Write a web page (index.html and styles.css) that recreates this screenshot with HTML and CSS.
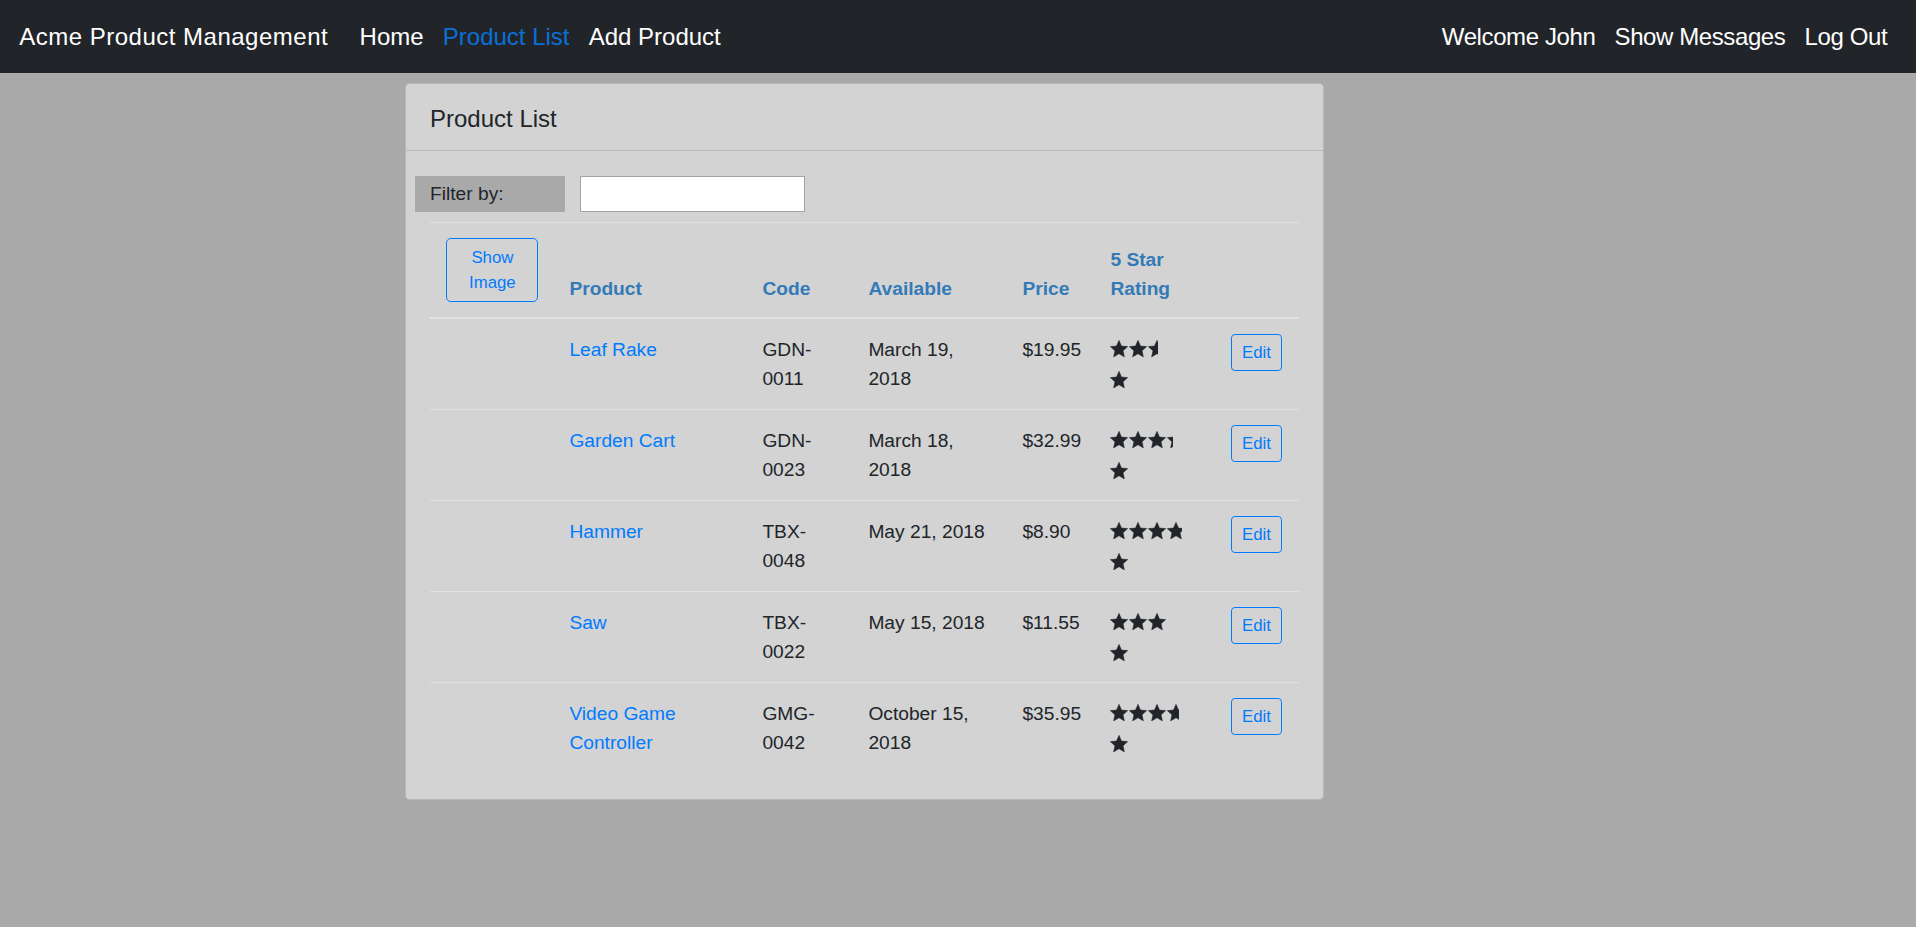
FILE: index.html
```html
<!DOCTYPE html>
<html lang="en">
<head>
<meta charset="utf-8">
<title>Acme Product Management</title>
<link rel="stylesheet" href="styles.css">
</head>
<body>
<nav class="navbar">
  <a class="brand" href="#">Acme Product Management</a>
  <ul class="nav">
    <li><a class="nav-link" href="#">Home</a></li>
    <li><a class="nav-link active" href="#">Product List</a></li>
    <li><a class="nav-link" href="#">Add Product</a></li>
  </ul>
  <ul class="nav nav-right">
    <li><a class="nav-link" href="#">Welcome John</a></li>
    <li><a class="nav-link" href="#">Show Messages</a></li>
    <li><a class="nav-link" href="#">Log Out</a></li>
  </ul>
</nav>

<main class="container">
  <div class="card">
    <div class="card-header">Product List</div>
    <div class="card-body">
      <div class="filter-row">
        <div class="filter-label">Filter by:</div>
        <div class="filter-col"><input class="filter-input" type="text"></div>
      </div>

      <table class="table">
        <colgroup>
          <col class="c-img"><col class="c-name"><col class="c-code"><col class="c-date"><col class="c-price"><col class="c-rating"><col class="c-edit">
        </colgroup>
        <thead>
          <tr>
            <th><button class="btn btn-show" type="button">Show Image</button></th>
            <th>Product</th>
            <th>Code</th>
            <th>Available</th>
            <th>Price</th>
            <th>5 Star Rating</th>
            <th></th>
          </tr>
        </thead>
        <tbody>
          <tr>
            <td></td>
            <td class="txt"><a class="plink" href="#">Leaf Rake</a></td>
            <td class="txt">GDN-0011</td>
            <td class="txt">March 19, 2018</td>
            <td class="txt price">$19.95</td>
            <td><div class="crop" style="width:48px" title="3.2"><div class="stars">
              <span class="star"><svg viewBox="0.3 0.3 23.4 22.3"><polygon points="12,0.6 15.29,8.07 23.41,8.89 17.33,14.33 19.05,22.31 12,18.2 4.95,22.31 6.67,14.33 0.59,8.89 8.71,8.07"/></svg></span>
              <span class="star"><svg viewBox="0.3 0.3 23.4 22.3"><polygon points="12,0.6 15.29,8.07 23.41,8.89 17.33,14.33 19.05,22.31 12,18.2 4.95,22.31 6.67,14.33 0.59,8.89 8.71,8.07"/></svg></span>
              <span class="star"><svg viewBox="0.3 0.3 23.4 22.3"><polygon points="12,0.6 15.29,8.07 23.41,8.89 17.33,14.33 19.05,22.31 12,18.2 4.95,22.31 6.67,14.33 0.59,8.89 8.71,8.07"/></svg></span>
              <span class="star"><svg viewBox="0.3 0.3 23.4 22.3"><polygon points="12,0.6 15.29,8.07 23.41,8.89 17.33,14.33 19.05,22.31 12,18.2 4.95,22.31 6.67,14.33 0.59,8.89 8.71,8.07"/></svg></span>
              <span class="star"><svg viewBox="0.3 0.3 23.4 22.3"><polygon points="12,0.6 15.29,8.07 23.41,8.89 17.33,14.33 19.05,22.31 12,18.2 4.95,22.31 6.67,14.33 0.59,8.89 8.71,8.07"/></svg></span>
            </div></div></td>
            <td><button class="btn btn-edit" type="button">Edit</button></td>
          </tr>
          <tr>
            <td></td>
            <td class="txt"><a class="plink" href="#">Garden Cart</a></td>
            <td class="txt">GDN-0023</td>
            <td class="txt">March 18, 2018</td>
            <td class="txt price">$32.99</td>
            <td><div class="crop" style="width:63px" title="4.2"><div class="stars">
              <span class="star"><svg viewBox="0.3 0.3 23.4 22.3"><polygon points="12,0.6 15.29,8.07 23.41,8.89 17.33,14.33 19.05,22.31 12,18.2 4.95,22.31 6.67,14.33 0.59,8.89 8.71,8.07"/></svg></span>
              <span class="star"><svg viewBox="0.3 0.3 23.4 22.3"><polygon points="12,0.6 15.29,8.07 23.41,8.89 17.33,14.33 19.05,22.31 12,18.2 4.95,22.31 6.67,14.33 0.59,8.89 8.71,8.07"/></svg></span>
              <span class="star"><svg viewBox="0.3 0.3 23.4 22.3"><polygon points="12,0.6 15.29,8.07 23.41,8.89 17.33,14.33 19.05,22.31 12,18.2 4.95,22.31 6.67,14.33 0.59,8.89 8.71,8.07"/></svg></span>
              <span class="star"><svg viewBox="0.3 0.3 23.4 22.3"><polygon points="12,0.6 15.29,8.07 23.41,8.89 17.33,14.33 19.05,22.31 12,18.2 4.95,22.31 6.67,14.33 0.59,8.89 8.71,8.07"/></svg></span>
              <span class="star"><svg viewBox="0.3 0.3 23.4 22.3"><polygon points="12,0.6 15.29,8.07 23.41,8.89 17.33,14.33 19.05,22.31 12,18.2 4.95,22.31 6.67,14.33 0.59,8.89 8.71,8.07"/></svg></span>
            </div></div></td>
            <td><button class="btn btn-edit" type="button">Edit</button></td>
          </tr>
          <tr>
            <td></td>
            <td class="txt"><a class="plink" href="#">Hammer</a></td>
            <td class="txt">TBX-0048</td>
            <td class="txt">May 21, 2018</td>
            <td class="txt price">$8.90</td>
            <td><div class="crop" style="width:72px" title="4.8"><div class="stars">
              <span class="star"><svg viewBox="0.3 0.3 23.4 22.3"><polygon points="12,0.6 15.29,8.07 23.41,8.89 17.33,14.33 19.05,22.31 12,18.2 4.95,22.31 6.67,14.33 0.59,8.89 8.71,8.07"/></svg></span>
              <span class="star"><svg viewBox="0.3 0.3 23.4 22.3"><polygon points="12,0.6 15.29,8.07 23.41,8.89 17.33,14.33 19.05,22.31 12,18.2 4.95,22.31 6.67,14.33 0.59,8.89 8.71,8.07"/></svg></span>
              <span class="star"><svg viewBox="0.3 0.3 23.4 22.3"><polygon points="12,0.6 15.29,8.07 23.41,8.89 17.33,14.33 19.05,22.31 12,18.2 4.95,22.31 6.67,14.33 0.59,8.89 8.71,8.07"/></svg></span>
              <span class="star"><svg viewBox="0.3 0.3 23.4 22.3"><polygon points="12,0.6 15.29,8.07 23.41,8.89 17.33,14.33 19.05,22.31 12,18.2 4.95,22.31 6.67,14.33 0.59,8.89 8.71,8.07"/></svg></span>
              <span class="star"><svg viewBox="0.3 0.3 23.4 22.3"><polygon points="12,0.6 15.29,8.07 23.41,8.89 17.33,14.33 19.05,22.31 12,18.2 4.95,22.31 6.67,14.33 0.59,8.89 8.71,8.07"/></svg></span>
            </div></div></td>
            <td><button class="btn btn-edit" type="button">Edit</button></td>
          </tr>
          <tr>
            <td></td>
            <td class="txt"><a class="plink" href="#">Saw</a></td>
            <td class="txt">TBX-0022</td>
            <td class="txt">May 15, 2018</td>
            <td class="txt price">$11.55</td>
            <td><div class="crop" style="width:55.5px" title="3.7"><div class="stars">
              <span class="star"><svg viewBox="0.3 0.3 23.4 22.3"><polygon points="12,0.6 15.29,8.07 23.41,8.89 17.33,14.33 19.05,22.31 12,18.2 4.95,22.31 6.67,14.33 0.59,8.89 8.71,8.07"/></svg></span>
              <span class="star"><svg viewBox="0.3 0.3 23.4 22.3"><polygon points="12,0.6 15.29,8.07 23.41,8.89 17.33,14.33 19.05,22.31 12,18.2 4.95,22.31 6.67,14.33 0.59,8.89 8.71,8.07"/></svg></span>
              <span class="star"><svg viewBox="0.3 0.3 23.4 22.3"><polygon points="12,0.6 15.29,8.07 23.41,8.89 17.33,14.33 19.05,22.31 12,18.2 4.95,22.31 6.67,14.33 0.59,8.89 8.71,8.07"/></svg></span>
              <span class="star"><svg viewBox="0.3 0.3 23.4 22.3"><polygon points="12,0.6 15.29,8.07 23.41,8.89 17.33,14.33 19.05,22.31 12,18.2 4.95,22.31 6.67,14.33 0.59,8.89 8.71,8.07"/></svg></span>
              <span class="star"><svg viewBox="0.3 0.3 23.4 22.3"><polygon points="12,0.6 15.29,8.07 23.41,8.89 17.33,14.33 19.05,22.31 12,18.2 4.95,22.31 6.67,14.33 0.59,8.89 8.71,8.07"/></svg></span>
            </div></div></td>
            <td><button class="btn btn-edit" type="button">Edit</button></td>
          </tr>
          <tr>
            <td></td>
            <td class="txt"><a class="plink" href="#">Video Game Controller</a></td>
            <td class="txt">GMG-0042</td>
            <td class="txt">October 15, 2018</td>
            <td class="txt price">$35.95</td>
            <td><div class="crop" style="width:69px" title="4.6"><div class="stars">
              <span class="star"><svg viewBox="0.3 0.3 23.4 22.3"><polygon points="12,0.6 15.29,8.07 23.41,8.89 17.33,14.33 19.05,22.31 12,18.2 4.95,22.31 6.67,14.33 0.59,8.89 8.71,8.07"/></svg></span>
              <span class="star"><svg viewBox="0.3 0.3 23.4 22.3"><polygon points="12,0.6 15.29,8.07 23.41,8.89 17.33,14.33 19.05,22.31 12,18.2 4.95,22.31 6.67,14.33 0.59,8.89 8.71,8.07"/></svg></span>
              <span class="star"><svg viewBox="0.3 0.3 23.4 22.3"><polygon points="12,0.6 15.29,8.07 23.41,8.89 17.33,14.33 19.05,22.31 12,18.2 4.95,22.31 6.67,14.33 0.59,8.89 8.71,8.07"/></svg></span>
              <span class="star"><svg viewBox="0.3 0.3 23.4 22.3"><polygon points="12,0.6 15.29,8.07 23.41,8.89 17.33,14.33 19.05,22.31 12,18.2 4.95,22.31 6.67,14.33 0.59,8.89 8.71,8.07"/></svg></span>
              <span class="star"><svg viewBox="0.3 0.3 23.4 22.3"><polygon points="12,0.6 15.29,8.07 23.41,8.89 17.33,14.33 19.05,22.31 12,18.2 4.95,22.31 6.67,14.33 0.59,8.89 8.71,8.07"/></svg></span>
            </div></div></td>
            <td><button class="btn btn-edit" type="button">Edit</button></td>
          </tr>
        </tbody>
      </table>
    </div>
  </div>
</main>
</body>
</html>
```

FILE: styles.css
```css
* { box-sizing: border-box; }

html, body {
  margin: 0;
  padding: 0;
}

body {
  min-height: 100vh;
  background: #a9a9a9;
  font-family: "Liberation Sans", Arial, sans-serif;
  font-size: 19.2px;
  line-height: 1.5;
  color: #212529;
}

a { text-decoration: none; }

/* ---------- navbar ---------- */
.navbar {
  display: flex;
  align-items: center;
  height: 73px;
  padding: 0 19.2px;
  background: #212529;
}

.brand {
  font-size: 24px;
  line-height: 36px;
  letter-spacing: 0.5px;
  color: #fff;
  margin-right: 21.8px;
  white-space: nowrap;
}

.nav {
  display: flex;
  list-style: none;
  margin: 0;
  padding: 0;
}

.nav-right { margin-left: auto; }

.nav-link {
  display: block;
  padding: 0 9.6px;
  font-size: 24px;
  line-height: 36px;
  color: #fff;
  white-space: nowrap;
}

.nav-right .nav-link { letter-spacing: -0.4px; }

.nav-link.active { color: #0a70d8; }

/* ---------- card ---------- */
.container {
  max-width: 1140px;
  margin: 10px auto 0;
  padding: 0 15px;
}

.card {
  width: 919px;
  margin-left: 2px;
  background: #d3d3d3;
  border: 1px solid rgba(0, 0, 0, 0.125);
  border-radius: 4.8px;
}

.card-header {
  padding: 15.9px 24px 12.9px;
  font-size: 24px;
  line-height: 37.5px;
  border-bottom: 1px solid rgba(0, 0, 0, 0.125);
}

.card-body {
  padding: 24px 24px 25.5px;
}

/* ---------- filter ---------- */
.filter-row {
  display: flex;
  margin: 1px -15px 0;
}

.filter-label {
  width: 150px;
  height: 35.5px;
  padding: 3.5px 15px 0;
  background: #a9a9a9;
  line-height: 28.8px;
}

.filter-col {
  padding: 0 15px;
}

.filter-input {
  display: block;
  width: 225px;
  height: 35.5px;
  margin: 0;
  background: #fff;
  border: 1px solid #a3a3a3;
  font: inherit;
}

/* ---------- table ---------- */
.table {
  width: 100%;
  margin-top: 10px;
  border-collapse: collapse;
  table-layout: fixed;
}

.c-img { width: 125px; }
.c-name { width: 193px; }
.c-code { width: 106px; }
.c-date { width: 154px; }
.c-price { width: 88px; }
.c-rating { width: 121px; }
.c-edit { width: 82px; }

.table th,
.table td {
  padding: 14.4px;
  border-top: 1px solid #dee2e6;
  line-height: 28.8px;
  text-align: left;
}

.table th {
  padding: 15.6px 14.4px 13.4px;
  vertical-align: bottom;
  border-bottom: 2px solid #dee2e6;
  color: #337ab7;
  font-weight: bold;
}

.table td {
  vertical-align: top;
}

.table td.txt { padding-top: 16.9px; }

.table td.price { white-space: nowrap; }

.plink { color: #007bff; }

/* ---------- buttons ---------- */
.btn {
  display: inline-block;
  margin: 0;
  background: transparent;
  border: 1px solid #007bff;
  color: #007bff;
  font-family: inherit;
  text-align: center;
  cursor: pointer;
}

.btn-show {
  display: block;
  width: 92px;
  height: 63.5px;
  margin: 0 0 2px 2px;
  padding: 4.8px 9.6px;
  font-size: 16.8px;
  line-height: 25.2px;
  border-radius: 4.8px;
}

.btn-edit {
  display: block;
  padding: 5.3px 9.6px;
  font-size: 16.8px;
  line-height: 25.2px;
  border-radius: 3.84px;
}

/* ---------- stars ---------- */
.crop {
  overflow: hidden;
}

.stars {
  display: flex;
  flex-wrap: wrap;
  width: 76px;
}

.star {
  display: flex;
  align-items: center;
  width: 18.8px;
  height: 30.6px;
}

.star svg {
  display: block;
  width: 18px;
  height: 17.2px;
  fill: #212529;
  stroke: #212529;
  stroke-width: 0.6;
  stroke-linejoin: round;
}
```
